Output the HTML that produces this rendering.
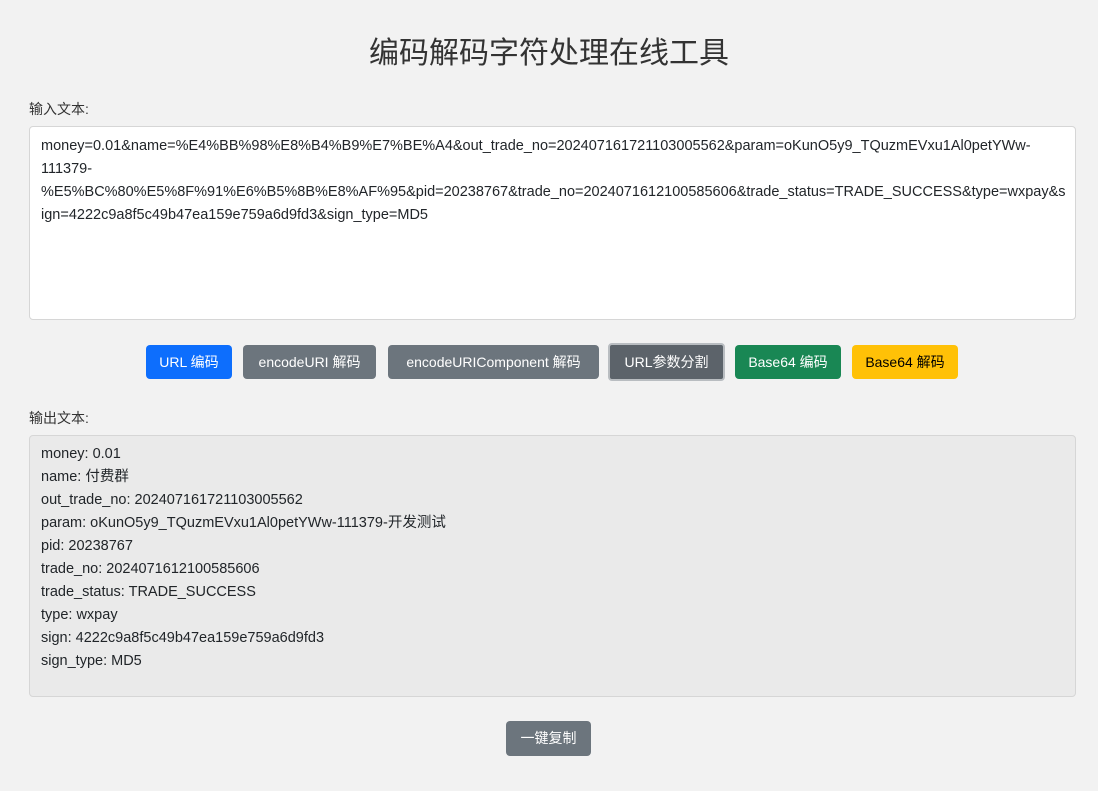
<!DOCTYPE html>
<html><head><meta charset="utf-8"><style>
body{margin:0;background:#f2f2f2;font-family:"Liberation Sans","Noto Sans CJK SC",sans-serif;color:#212529;font-size:14px;}
h1{position:absolute;left:0;right:0;top:34px;margin:0;text-align:center;font-weight:400;font-size:30px;color:#333;line-height:40px}
.lbl{position:absolute;left:29px;font-size:14px;color:#333}
.box{position:absolute;left:29px;width:1047px;border:1px solid #d6d6d6;border-radius:4px;box-sizing:border-box;padding:8px 11px;line-height:23px;font-size:14.5px;white-space:pre;overflow:hidden}
.btn{position:absolute;top:345px;height:34px;line-height:34px;border-radius:4px;color:#fff;text-align:center;font-size:14px;box-sizing:border-box}
</style></head><body>
<h1>编码解码字符处理在线工具</h1>
<div class="lbl" style="top:99px">输入文本:</div>
<div class="box" style="top:126px;height:194px;background:#fff">money=0.01&amp;name=%E4%BB%98%E8%B4%B9%E7%BE%A4&amp;out_trade_no=2024071617211030055​62&amp;param=oKunO5y9_TQuzmEVxu1Al0petYWw-
111379-
%E5%BC%80%E5%8F%91%E6%B5%8B%E8%AF%95&amp;pid=20238767&amp;trade_no=2024071612100585606&amp;trade_status=TRADE_SUCCESS&amp;type=wxpay&amp;s
ign=4222c9a8f5c49b47ea159e759a6d9fd3&amp;sign_type=MD5</div>
<div class="btn" style="left:146px;width:86px;background:#0d6efd">URL 编码</div>
<div class="btn" style="left:243px;width:133px;background:#6c757d">encodeURI 解码</div>
<div class="btn" style="left:388px;width:211px;background:#6c757d">encodeURIComponent 解码</div>
<div class="btn" style="left:608px;top:343px;width:117px;height:38px;line-height:34px;background:#5c636a;border:2px solid #b9bdc1">URL参数分割</div>
<div class="btn" style="left:735px;width:106px;background:#198754">Base64 编码</div>
<div class="btn" style="left:852px;width:106px;background:#ffc107;color:#000">Base64 解码</div>
<div class="lbl" style="top:408px">输出文本:</div>
<div class="box" style="top:435px;height:262px;background:#eaeaea;padding-top:7px">money: 0.01
name: 付费群
out_trade_no: 2024071617211030055​62
param: oKunO5y9_TQuzmEVxu1Al0petYWw-111379-开发测试
pid: 20238767
trade_no: 2024071612100585606
trade_status: TRADE_SUCCESS
type: wxpay
sign: 4222c9a8f5c49b47ea159e759a6d9fd3
sign_type: MD5</div>
<div class="btn" style="left:506px;top:721px;width:85px;height:35px;background:#6c757d">一键复制</div>
</body></html>
